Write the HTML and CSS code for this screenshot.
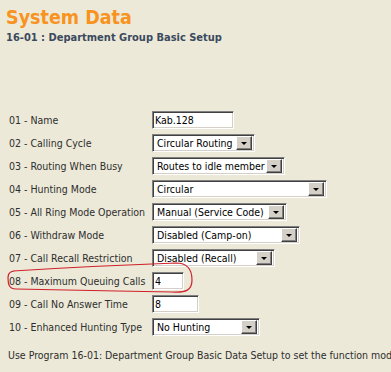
FILE: index.html
```html
<!DOCTYPE html>
<html>
<head>
  <meta charset="utf-8">
  <link rel="stylesheet" href="styles.css">
</head>
<body>
  <div class="header">
    <h1>System Data</h1>
    <h2>16-01 : Department Group Basic Setup</h2>
  </div>

  <div class="form">
    <label>01 - Name</label>
    <input class="field" type="text" value="Kab.128" style="width: 82px">

    <label>02 - Calling Cycle</label>
    <div class="select" style="width: 103px"><span class="value">Circular Routing</span><span class="arrow"></span></div>

    <label>03 - Routing When Busy</label>
    <div class="select" style="width: 133px"><span class="value">Routes to idle member</span><span class="arrow"></span></div>

    <label>04 - Hunting Mode</label>
    <div class="select" style="width: 175px"><span class="value">Circular</span><span class="arrow"></span></div>

    <label>05 - All Ring Mode Operation</label>
    <div class="select" style="width: 135px"><span class="value">Manual (Service Code)</span><span class="arrow"></span></div>

    <label>06 - Withdraw Mode</label>
    <div class="select" style="width: 148px"><span class="value">Disabled (Camp-on)</span><span class="arrow"></span></div>

    <label>07 - Call Recall Restriction</label>
    <div class="select" style="width: 123px"><span class="value">Disabled (Recall)</span><span class="arrow"></span></div>

    <label>08 - Maximum Queuing Calls</label>
    <input class="field" type="text" value="4" style="width: 32px">

    <label>09 - Call No Answer Time</label>
    <input class="field" type="text" value="8" style="width: 47px">

    <label>10 - Enhanced Hunting Type</label>
    <div class="select" style="width: 108px"><span class="value">No Hunting</span><span class="arrow"></span></div>
  </div>

  <p class="note">Use Program 16-01: Department Group Basic Data Setup to set the function mode for each Department Group.</p>

  <svg class="markup" viewBox="0 0 200 40" width="200" height="40">
    <path d="M13 13 C60 10, 120 7, 176 5 C188 5, 192 12, 192 22 C192 32, 186 35, 172 34 C120 33, 55 32, 16 31 C9 31, 8 26, 8 20 C8 15, 10 13, 15 13"/>
  </svg>
</body>
</html>
```

FILE: styles.css
```css
body {
  margin: 0;
  padding: 0;
  width: 391px;
  height: 372px;
  overflow: hidden;
  position: relative;
  background: #ece9d8;
  font-family: "DejaVu Sans Condensed", "Liberation Sans", sans-serif;
  font-size: 10.5px;
  color: #2e2e2e;
}

.header {
  padding: 6px 6px 0;
}

.header h1 {
  margin: 0;
  font-size: 19.5px;
  line-height: 24px;
  font-weight: bold;
  color: #f7931e;
}

.header h2 {
  margin: 1px 0 0;
  font-size: 11px;
  line-height: 13px;
  font-weight: bold;
  color: #3b4a5e;
}

.form {
  display: grid;
  grid-template-columns: 143px auto;
  grid-auto-rows: 23px;
  align-items: center;
  justify-items: start;
  padding-left: 9px;
  margin-top: 64px;
}

.form label {
  white-space: nowrap;
}

.field {
  box-sizing: border-box;
  height: 18px;
  margin: 0;
  padding: 0 2px;
  font: inherit;
  color: #000;
  background: #fff;
  border: 1px solid;
  border-color: #808080 #fff #fff #808080;
  box-shadow: inset 1px 1px 0 #404040, inset -1px -1px 0 #d4d0c8;
  outline: none;
}

.select {
  box-sizing: border-box;
  display: flex;
  align-items: center;
  height: 18px;
  background: #fff;
  border: 1px solid;
  border-color: #808080 #fff #fff #808080;
  box-shadow: inset 1px 1px 0 #404040, inset -1px -1px 0 #d4d0c8;
  color: #000;
}

.select .value {
  flex: 1;
  padding-left: 4px;
  white-space: nowrap;
  overflow: hidden;
}

.select .arrow {
  position: relative;
  box-sizing: border-box;
  width: 16px;
  height: 14px;
  margin-right: 2px;
  background: #d4d0c8;
  border: 1px solid;
  border-color: #fff #404040 #404040 #fff;
  box-shadow: inset -1px -1px 0 #808080;
}

.select .arrow::after {
  content: "";
  position: absolute;
  left: 4px;
  top: 5px;
  border-left: 3px solid transparent;
  border-right: 3px solid transparent;
  border-top: 3px solid #000;
}

.note {
  margin: 11px 0 0 8px;
  line-height: 13px;
  white-space: nowrap;
}

.markup {
  position: absolute;
  left: 0;
  top: 258px;
}

.markup path {
  fill: none;
  stroke: #d0202a;
  stroke-width: 1.2;
}
```
